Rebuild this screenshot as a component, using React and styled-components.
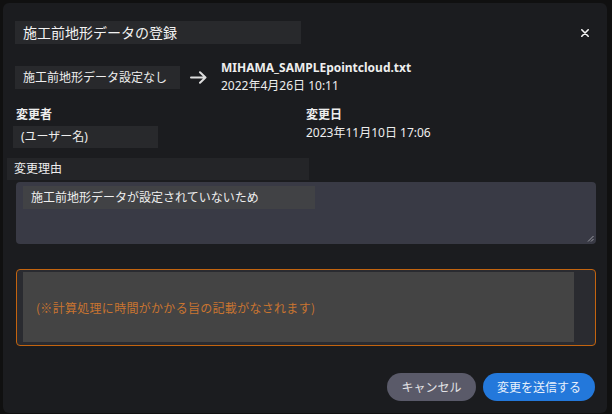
import React from "react";
import styled, { createGlobalStyle } from "styled-components";

const GlobalStyle = createGlobalStyle`
  html, body {
    margin: 0;
    padding: 0;
    background: #101010;
    overflow: hidden;
  }
  body {
    font-family: "Noto Sans", "Noto Sans CJK JP", sans-serif;
    color: #eeeeee;
  }
`;

const Dialog = styled.div`
  box-sizing: border-box;
  margin: 3px 0 0 3px;
  width: 604px;
  height: 410px;
  background: #1b1c1f;
  border-radius: 6px;
  display: flex;
  flex-direction: column;
`;

const Header = styled.div`
  display: flex;
  align-items: center;
  justify-content: space-between;
  padding: 18px 18px 0 12px;
`;

const TitleBox = styled.h1`
  margin: 0;
  width: 286px;
  height: 23px;
  box-sizing: border-box;
  padding-left: 8px;
  background: #28292c;
  font-size: 14px;
  font-weight: 400;
  line-height: 23px;
  color: #f2f2f2;
`;

const CloseButton = styled.button`
  border: 0;
  background: none;
  padding: 0;
  width: 8px;
  height: 8px;
  display: flex;
  cursor: pointer;
`;

const FileRow = styled.div`
  display: flex;
  align-items: center;
  margin-top: 15px;
  padding-left: 12px;
`;

const ValueBox = styled.div`
  box-sizing: border-box;
  width: ${(p) => p.$width}px;
  height: ${(p) => p.$height || 23}px;
  padding-left: 8px;
  background: #28292c;
  font-size: 12px;
  line-height: ${(p) => p.$height || 23}px;
  color: #eeeeee;
  white-space: nowrap;
`;

const Arrow = styled.svg`
  margin: 0 14px 0 10px;
  flex-shrink: 0;
`;

const FileInfo = styled.div`
  display: flex;
  flex-direction: column;
  font-size: 12px;
  line-height: 18px;
`;

const FileName = styled.span`
  font-weight: 700;
`;

const MetaGrid = styled.div`
  display: grid;
  grid-template-columns: 293px 1fr;
  margin-top: 12px;
  padding-left: 10px;
`;

const MetaColumn = styled.div`
  display: flex;
  flex-direction: column;
  gap: 3px;
`;

const Label = styled.div`
  font-size: 12px;
  font-weight: 700;
  line-height: 16px;
  padding-left: ${(p) => p.$indent || 0}px;
`;

const MetaValue = styled.div`
  font-size: 12px;
  line-height: 14px;
`;

const ReasonBar = styled.div`
  box-sizing: border-box;
  margin: 10px 0 0 4px;
  width: 302px;
  height: 22px;
  padding-left: 7px;
  background: #242528;
  font-size: 12px;
  line-height: 22px;
`;

const TextArea = styled.div`
  position: relative;
  box-sizing: border-box;
  margin: 2px 0 0 13px;
  width: 580px;
  height: 62px;
  padding: 4px 0 0 7px;
  background: #393a45;
  border-radius: 4px;
`;

const ReasonText = styled.div`
  box-sizing: border-box;
  width: 292px;
  height: 23px;
  padding-left: 8px;
  background: #414245;
  font-size: 12px;
  line-height: 23px;
`;

const Grip = styled.svg`
  position: absolute;
  right: 2px;
  bottom: 2px;
`;

const NoticeBox = styled.div`
  box-sizing: border-box;
  margin: 25px 0 0 13px;
  width: 580px;
  height: 77px;
  padding: 2px 21px 3px 6px;
  background: #2a2b30;
  border: 1px solid #c3640f;
  border-radius: 4px;
  display: flex;
`;

const NoticeInner = styled.div`
  flex: 1;
  display: flex;
  align-items: center;
  padding-left: 13px;
  background: #444444;
  color: #c97430;
  font-family: "Noto Sans CJK JP", sans-serif;
  font-size: 12px;
  letter-spacing: 0.3px;
`;

const Footer = styled.div`
  display: flex;
  justify-content: flex-end;
  gap: 7px;
  margin-top: 27px;
  padding-right: 12px;
`;

const PillButton = styled.button`
  width: ${(p) => p.$width}px;
  height: 28px;
  padding: 0;
  border: 0;
  border-radius: 14px;
  background: ${(p) => (p.$primary ? "#2378db" : "#5a5a69")};
  color: ${(p) => (p.$primary ? "#e8f0fb" : "#e2e2e6")};
  font-family: "Noto Sans", "Noto Sans CJK JP", sans-serif;
  font-size: 12px;
  cursor: pointer;
`;

export default function App() {
  return (
    <>
      <GlobalStyle />
      <Dialog>
        <Header>
          <TitleBox>施工前地形データの登録</TitleBox>
          <CloseButton aria-label="閉じる">
            <svg width="8" height="8" viewBox="0 0 8 8">
              <path d="M0.8 0.8 L7.2 7.2 M7.2 0.8 L0.8 7.2" stroke="#f4f4f4" strokeWidth="1.6" strokeLinecap="round" />
            </svg>
          </CloseButton>
        </Header>

        <FileRow>
          <ValueBox $width={165}>施工前地形データ設定なし</ValueBox>
          <Arrow width="17" height="13" viewBox="0 0 17 13">
            <path d="M1 6.5 H15.5 M10 1.2 L15.5 6.5 L10 11.8" stroke="#dddddd" strokeWidth="2" fill="none" strokeLinecap="round" strokeLinejoin="round" />
          </Arrow>
          <FileInfo>
            <FileName>MIHAMA_SAMPLEpointcloud.txt</FileName>
            <span>2022年4月26日 10:11</span>
          </FileInfo>
        </FileRow>

        <MetaGrid>
          <MetaColumn>
            <Label $indent={3}>変更者</Label>
            <ValueBox $width={145} $height={22}>(ユーザー名)</ValueBox>
          </MetaColumn>
          <MetaColumn>
            <Label>変更日</Label>
            <MetaValue>2023年11月10日 17:06</MetaValue>
          </MetaColumn>
        </MetaGrid>

        <ReasonBar>変更理由</ReasonBar>
        <TextArea>
          <ReasonText>施工前地形データが設定されていないため</ReasonText>
          <Grip width="7" height="7" viewBox="0 0 7 7">
            <path d="M1 6.5 L6.5 1 M4 6.5 L6.5 4" stroke="#9a9aa2" strokeWidth="1" />
          </Grip>
        </TextArea>

        <NoticeBox>
          <NoticeInner>(※計算処理に時間がかかる旨の記載がなされます)</NoticeInner>
        </NoticeBox>

        <Footer>
          <PillButton $width={89}>キャンセル</PillButton>
          <PillButton $primary $width={112}>変更を送信する</PillButton>
        </Footer>
      </Dialog>
    </>
  );
}
